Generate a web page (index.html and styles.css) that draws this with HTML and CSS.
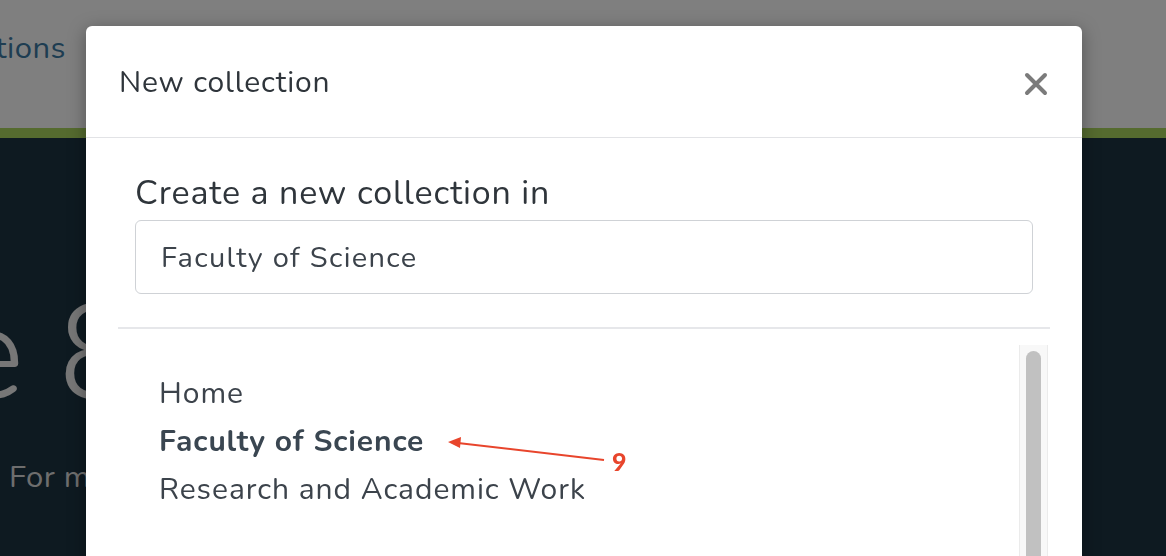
FILE: index.html
```html
<!DOCTYPE html>
<html>
<head>
<meta charset="utf-8">
<link rel="stylesheet" href="styles.css">
</head>
<body>
<div class="page">
  <header class="site-header">
    <a class="nav-link">Collections</a>
  </header>
  <div class="accent-band"></div>
  <section class="hero">
    <div class="hero-title-wrap"><h1 class="hero-title">Welcome 8</h1></div>
    <p class="hero-sub">For more information</p>
  </section>
</div>
<div class="backdrop"></div>
<div class="modal" role="dialog">
  <div class="modal-header">
    <h2 class="modal-title">New collection</h2>
    <svg class="close" width="24" height="24" viewBox="0 0 24 24" aria-label="Close">
      <path d="M3 3 L21 21 M21 3 L3 21" stroke="#7b7b7b" stroke-width="4" stroke-linecap="round" fill="none"/>
    </svg>
  </div>
  <div class="modal-body">
    <label class="field-label">Create a new collection in</label>
    <div class="field-input">Faculty of Science</div>
  </div>
  <div class="divider"></div>
  <div class="tree-wrap">
    <ul class="tree">
      <li>Home</li>
      <li class="selected">Faculty of Science</li>
      <li>Research and Academic Work</li>
    </ul>
    <div class="scrollbar"><div class="thumb"></div></div>
  </div>
</div>
<svg class="annotation" width="1166" height="556" viewBox="0 0 1166 556">
  <line x1="604" y1="460" x2="458" y2="443" stroke="#e8452c" stroke-width="2"/>
  <polygon points="448,442 461,437 460,448" fill="#e8452c"/>
  <text x="612" y="471" fill="#e8452c" font-family="Lato, sans-serif" font-weight="900" font-size="25">9</text>
</svg>
</body>
</html>
```
FILE: styles.css
```css
html, body {
  margin: 0;
  padding: 0;
  width: 1166px;
  height: 556px;
  overflow: hidden;
  font-family: "Nunito", "Lato", "Open Sans", sans-serif;
}
.page {
  display: flex;
  flex-direction: column;
  height: 556px;
}
.site-header {
  height: 128px;
  background: #ffffff;
  display: flex;
  justify-content: flex-end;
  width: 66px;
  align-items: flex-start;
}
.nav-link {
  margin-top: 27px;
  font-size: 31px;
  letter-spacing: 0.5px;
  color: #3c7aa4;
  white-space: nowrap;
}
.accent-band {
  height: 10px;
  background: #aad65e;
}
.hero {
  flex: 1;
  background: #1d3443;
  overflow: hidden;
}
.hero-title-wrap {
  width: 140px;
  display: flex;
  justify-content: flex-end;
  margin-top: 148px;
}
.hero-title {
  margin: 0;
  font-size: 136px;
  font-weight: 300;
  color: #efefef;
  line-height: 1;
  white-space: nowrap;
}
.hero-sub {
  margin: 34px 0 0 9px;
  font-size: 31px;
  letter-spacing: 0.5px;
  color: #dddddd;
  white-space: nowrap;
}
.backdrop {
  position: fixed;
  inset: 0;
  background: rgba(0, 0, 0, 0.5);
}
.modal {
  position: absolute;
  left: 86px;
  top: 26px;
  width: 996px;
  height: 560px;
  background: #ffffff;
  border-radius: 6px 6px 0 0;
  box-shadow: 0 4px 18px rgba(0, 0, 0, 0.35);
  color: #3c434b;
}
.modal-header {
  height: 111px;
  border-bottom: 1px solid #e2e3e6;
  display: flex;
  align-items: center;
  justify-content: space-between;
  padding: 0 34px 0 33px;
}
.modal-title {
  margin: 0;
  font-size: 30px;
  font-weight: 400;
  letter-spacing: 0.8px;
  color: #2f353b;
  position: relative;
  top: 1px;
}
.close {
  display: block;
  position: relative;
  top: 2px;
}
.modal-body {
  padding: 35px 49px 33px 49px;
  display: flex;
  flex-direction: column;
}
.field-label {
  font-size: 34px;
  letter-spacing: 0.85px;
  line-height: 40px;
  color: #2f353b;
  margin-bottom: 7px;
}
.field-input {
  height: 72px;
  border: 1px solid #cfd2d6;
  border-radius: 6px;
  display: flex;
  align-items: center;
  padding-left: 25px;
  font-size: 29px;
  letter-spacing: 1.3px;
  color: #3c434b;
}
.divider {
  margin: 0 32px;
  height: 2px;
  background: #e6e7ea;
}
.tree-wrap {
  margin: 16px 32px 0 32px;
  display: flex;
  justify-content: space-between;
  height: 220px;
}
.tree {
  list-style: none;
  margin: 25px 0 0 0;
  padding: 0 0 0 41px;
}
.tree li {
  font-size: 30px;
  letter-spacing: 0.95px;
  line-height: 48px;
  color: #3c434b;
}
.tree li.selected {
  font-weight: 700;
  letter-spacing: 0.85px;
  color: #3a4651;
}
.scrollbar {
  width: 27px;
  margin-right: 2px;
  background: #f8f8f8;
  border-left: 1px solid #ebebeb;
  border-right: 1px solid #ebebeb;
  display: flex;
  justify-content: center;
  padding-top: 6px;
}
.thumb {
  width: 15px;
  height: 300px;
  background: #c1c1c1;
  border-radius: 8px 8px 0 0;
}
.annotation {
  position: absolute;
  left: 0;
  top: 0;
  pointer-events: none;
}
```
